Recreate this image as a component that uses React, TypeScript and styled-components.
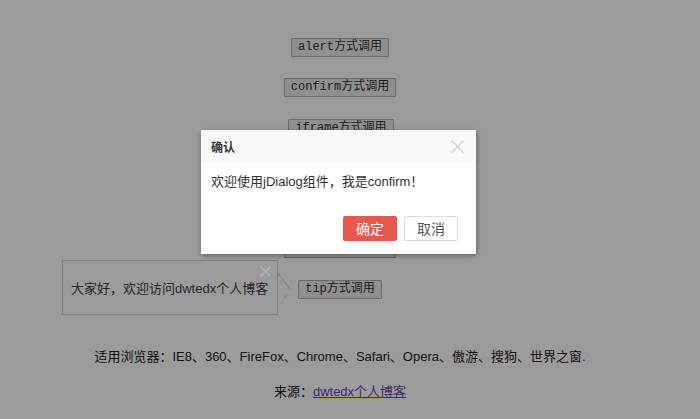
import React from "react";
import styled, { createGlobalStyle } from "styled-components";

const Global = createGlobalStyle`
  html, body { margin: 0; padding: 0; background: #9b9b9b; }
  body { font-family: "Liberation Sans", "Noto Sans CJK SC", sans-serif; width: 700px; height: 419px; overflow: hidden; }
`;

const Page = styled.div`
  position: relative;
  width: 700px;
  height: 419px;
  display: flex;
  flex-direction: column;
  align-items: center;
  padding-top: 38px;
  box-sizing: border-box;
`;

const ButtonList = styled.div`
  display: flex;
  flex-direction: column;
  align-items: center;
  gap: 21.3px;
  margin-left: -20px;
`;

const DemoButton = styled.button<{ $shift?: number }>`
  height: 19px;
  padding: 0 6px;
  margin-left: ${(p) => p.$shift ?? 0}px;
  background: #8f8f8f;
  border: 1px solid #6a6a6a;
  border-radius: 1px;
  color: #1a1a1a;
  font-family: "Liberation Mono", "Noto Sans CJK SC", monospace;
  font-size: 12px;
  line-height: 17px;
  box-sizing: border-box;
  white-space: nowrap;
`;

const Info = styled.p`
  margin: 48px 0 0;
  font-size: 13px;
  line-height: 20px;
  color: #111;
  margin-left: -20px;
  white-space: nowrap;
`;

const Source = styled.p`
  margin: 15px 0 0;
  font-size: 13px;
  line-height: 20px;
  color: #111;
  margin-left: -20px;
  a { color: #45286d; text-decoration: underline; }
`;

const Dialog = styled.div`
  position: absolute;
  left: 201px;
  top: 130px;
  width: 275px;
  height: 124px;
  background: #fff;
  box-shadow: 1px 2px 5px rgba(0, 0, 0, 0.35);
  display: flex;
  flex-direction: column;
`;

const DialogHead = styled.div`
  height: 33px;
  background: #f8f8f8;
  display: flex;
  align-items: center;
  justify-content: space-between;
  padding: 0 12px 0 10px;
  font-size: 12px;
  font-weight: bold;
  color: #333;
`;

const CloseIcon = styled.svg<{ $c: string }>`
  display: block;
  line { stroke: ${(p) => p.$c}; stroke-width: 1.2; }
`;

const DialogBody = styled.div`
  flex: 1;
  padding: 8px 10px 0;
  font-size: 13px;
  line-height: 22px;
  color: #333;
  white-space: nowrap;
`;

const DialogFoot = styled.div`
  display: flex;
  justify-content: flex-end;
  gap: 7px;
  padding: 0 18px 13px 0;
`;

const ActionButton = styled.button<{ $primary?: boolean }>`
  width: 54px;
  height: 25px;
  border-radius: 2px;
  font-family: "Noto Sans CJK SC", sans-serif;
  font-size: 14px;
  line-height: 23px;
  padding: 0;
  border: 1px solid ${(p) => (p.$primary ? "#e05a4f" : "#dcdcdc")};
  background: ${(p) => (p.$primary ? "#e8594d" : "#fff")};
  color: ${(p) => (p.$primary ? "#fff" : "#555")};
`;

const Tip = styled.div`
  position: absolute;
  left: 62px;
  top: 260px;
  width: 216px;
  height: 55px;
  box-sizing: border-box;
  border: 1px solid #7f7f7f;
  display: flex;
  align-items: center;
  padding: 0 0 0 8px;
  font-size: 13px;
  color: #262626;
  white-space: nowrap;
`;

const TipClose = styled.div`
  position: absolute;
  right: 6px;
  top: 5px;
`;

const TipArrow = styled.svg`
  position: absolute;
  left: 214px;
  top: 9px;
  polyline { fill: none; stroke: #7f7f7f; stroke-width: 1; }
`;

const X = ({ size, color }: { size: number; color: string }) => (
  <CloseIcon $c={color} width={size} height={size} viewBox={`0 0 ${size} ${size}`}>
    <line x1="0.5" y1="0.5" x2={size - 0.5} y2={size - 0.5} />
    <line x1={size - 0.5} y1="0.5" x2="0.5" y2={size - 0.5} />
  </CloseIcon>
);

export default function App() {
  return (
    <>
      <Global />
      <Page>
        <ButtonList>
          <DemoButton>alert方式调用</DemoButton>
          <DemoButton>confirm方式调用</DemoButton>
          <DemoButton $shift={2}>iframe方式调用</DemoButton>
          <DemoButton>loading方式调用</DemoButton>
          <DemoButton>prompt方式调用</DemoButton>
          <DemoButton>message方式调用</DemoButton>
          <DemoButton>tip方式调用</DemoButton>
        </ButtonList>
        <Info>适用浏览器：IE8、360、FireFox、Chrome、Safari、Opera、傲游、搜狗、世界之窗.</Info>
        <Source>
          来源：<a href="#">dwtedx个人博客</a>
        </Source>

        <Tip>
          大家好，欢迎访问dwtedx个人博客
          <TipClose>
            <X size={11} color="#b5b5b5" />
          </TipClose>
          <TipArrow width="16" height="30" viewBox="0 0 16 30">
            <polyline points="0,2 13,19" />
            <polyline points="10,25 6,29" />
          </TipArrow>
        </Tip>

        <Dialog>
          <DialogHead>
            确认
            <X size={13} color="#d0d0d0" />
          </DialogHead>
          <DialogBody>欢迎使用jDialog组件，我是confirm！</DialogBody>
          <DialogFoot>
            <ActionButton $primary>确定</ActionButton>
            <ActionButton>取消</ActionButton>
          </DialogFoot>
        </Dialog>
      </Page>
    </>
  );
}
